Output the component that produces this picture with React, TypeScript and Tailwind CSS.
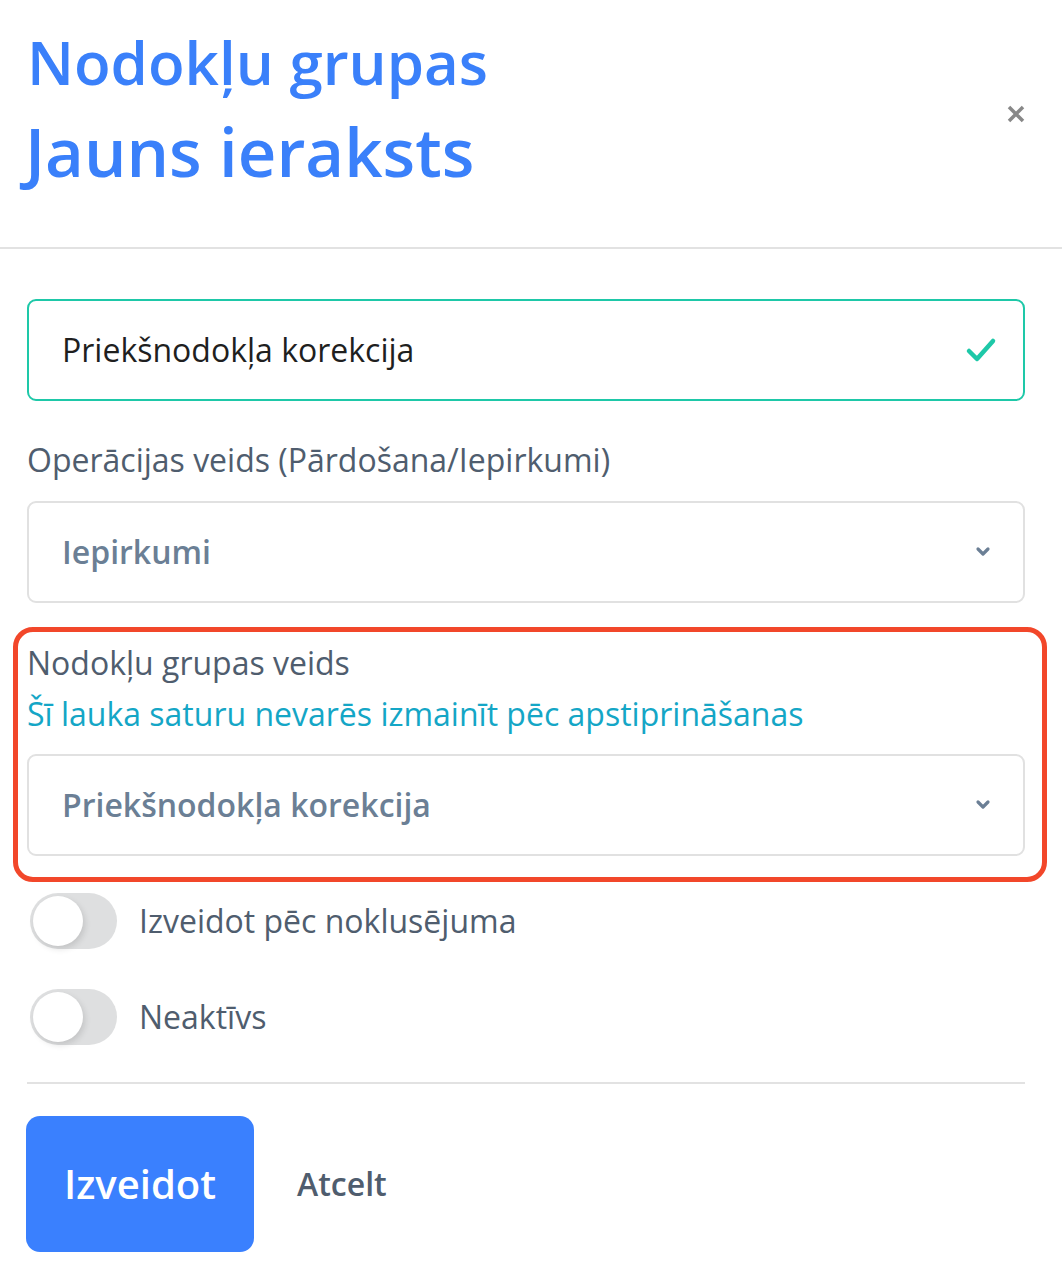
import React from "react";

const Chevron = () => (
  <svg width="16" height="12" viewBox="0 0 16 12" className="shrink-0">
    <path d="M3 3 L8 8 L13 3" fill="none" stroke="#6b7f95" strokeWidth="3.2" strokeLinecap="round" strokeLinejoin="round" />
  </svg>
);

const Toggle = ({ label }: { label: string }) => (
  <div className="flex items-center h-[56px]">
    <div className="relative w-[87px] h-[56px] rounded-full bg-[#dedfe0] shrink-0 ml-[3px]">
      <div className="absolute left-[3px] top-[3px] w-[50px] h-[50px] rounded-full bg-white shadow-[2px_3px_6px_rgba(0,0,0,0.12)]" />
    </div>
    <span className="ml-[22px] text-[32px] text-[#4f5d6e]">{label}</span>
  </div>
);

export default function App() {
  return (
    <div className="w-[1062px] h-[1288px] bg-white overflow-hidden" style={{ fontFamily: '"Open Sans", sans-serif' }}>
      <div className="flex items-start justify-between pl-[22px] pr-[36px] pt-[18px] h-[247px]">
        <h1 className="font-semibold text-[#3a80fa]">
          <div className="pl-[5px] text-[60px] leading-[88px]">Nodokļu grupas</div>
          <div className="pl-[3px] text-[67px] leading-[90px]">Jauns ieraksts</div>
        </h1>
        <div className="mt-[86px] text-[#8a8a8a]">
          <svg width="20" height="20" viewBox="0 0 20 20">
            <path d="M3 3 L17 17 M17 3 L3 17" stroke="#888" strokeWidth="3.5" strokeLinecap="butt" />
          </svg>
        </div>
      </div>
      <div className="h-[2px] bg-[#e2e2e2]" />
      <div className="pl-[27px] pr-[37px] pt-[50px]">
        <div className="h-[102px] rounded-[9px] border-2 border-[#1ec8a8] flex items-center justify-between pl-[33px] pr-[26px]">
          <span className="text-[32px] text-[#1f1f1f]">Priekšnodokļa korekcija</span>
          <svg width="32" height="28" viewBox="0 0 32 28">
            <path d="M4 15 L12 23 L28 5" fill="none" stroke="#1ec8a8" strokeWidth="4.5" strokeLinecap="round" strokeLinejoin="round" />
          </svg>
        </div>
        <div className="mt-[37px] text-[32px] leading-[44px] text-[#4f5d6e]">Operācijas veids (Pārdošana/Iepirkumi)</div>
        <div className="mt-[19px] h-[102px] rounded-[9px] border-2 border-[#e1e1e1] flex items-center justify-between pl-[33px] pr-[32px]">
          <span className="text-[32px] font-semibold text-[#6b7f95]">Iepirkumi</span>
          <Chevron />
        </div>
      </div>
      <div className="ml-[13px] mr-[15px] mt-[24px] h-[255px] rounded-[20px] border-[5px] border-[#f2472a] pl-[9px] pr-[17px] pt-[7px]">
        <div className="text-[32px] leading-[48px] text-[#4f5d6e]">Nodokļu grupas veids</div>
        <div className="mt-[3px] text-[32px] leading-[48px] text-[#14a6c6]">Šī lauka saturu nevarēs izmainīt pēc apstiprināšanas</div>
        <div className="mt-[16px] h-[102px] rounded-[9px] border-2 border-[#e1e1e1] flex items-center justify-between pl-[33px] pr-[32px]">
          <span className="text-[32px] font-semibold text-[#6b7f95]">Priekšnodokļa korekcija</span>
          <Chevron />
        </div>
      </div>
      <div className="pl-[27px] pr-[37px] mt-[11px] flex flex-col gap-[40px]">
        <Toggle label="Izveidot pēc noklusējuma" />
        <Toggle label="Neaktīvs" />
      </div>
      <div className="ml-[27px] mr-[37px] mt-[37px] h-[2px] bg-[#e2e2e2]" />
      <div className="px-[26px] mt-[32px] flex items-center">
        <button className="w-[228px] h-[136px] rounded-[14px] bg-[#3a80fe] text-white text-[40px] font-semibold">Izveidot</button>
        <span className="ml-[43px] text-[32px] font-semibold text-[#4f5d6e]">Atcelt</span>
      </div>
    </div>
  );
}
